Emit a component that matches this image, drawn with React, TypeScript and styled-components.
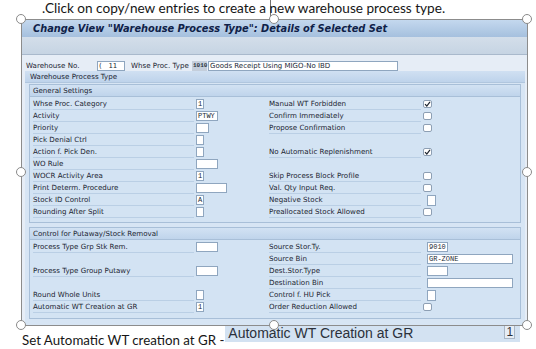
import React from 'react'
import styled, { createGlobalStyle } from 'styled-components'

type Cell =
  | { kind: 'field'; w: number; text?: string; h?: number; shift?: number }
  | { kind: 'check'; on: boolean }
  | null

type Line = [string | null, Cell, string | null, Cell]

const field = (w: number, text?: string, h?: number, shift?: number): Cell => ({ kind: 'field', w, text, h, shift })
const check = (on: boolean): Cell => ({ kind: 'check', on })

const generalRows: Line[] = [
  ['Whse Proc. Category', field(8, '1'), 'Manual WT Forbidden', check(true)],
  ['Activity', field(22, 'PTWY'), 'Confirm Immediately', check(false)],
  ['Priority', field(13), 'Propose Confirmation', check(false)],
  ['Pick Denial Ctrl', field(8), null, null],
  ['Action f. Pick Den.', field(8), 'No Automatic Replenishment', check(true)],
  ['WO Rule', field(22), null, null],
  ['WOCR Activity Area', field(8, '1'), 'Skip Process Block Profile', check(false)],
  ['Print Determ. Procedure', field(31), 'Val. Qty Input Req.', check(false)],
  ['Stock ID Control', field(8, 'A'), 'Negative Stock', field(9, undefined, 11, 4)],
  ['Rounding After Split', field(8), 'Preallocated Stock Allowed', check(false)],
]

const putawayRows: Line[] = [
  ['Process Type Grp Stk Rem.', field(22), 'Source Stor.Ty.', field(21, '9010', 10, 4)],
  [null, null, 'Source Bin', field(86, 'GR-ZONE', 10, 4)],
  ['Process Type Group Putawy', field(22), 'Dest.Stor.Type', field(21, undefined, 10, 4)],
  [null, null, 'Destination Bin', field(86, undefined, 10, 4)],
  ['Round Whole Units', field(8), 'Control f. HU Pick', field(9, undefined, 11, 4)],
  ['Automatic WT Creation at GR', field(8, '1'), 'Order Reduction Allowed', check(false)],
]

const GlobalStyle = createGlobalStyle`
  html, body {
    margin: 0;
    padding: 0;
    background: #ffffff;
  }
  body {
    width: 536px;
    height: 349px;
    overflow: hidden;
  }
`

const Page = styled.div`
  width: 536px;
  height: 349px;
  overflow: hidden;
  background: #ffffff;
  font-family: Lato, "Open Sans", sans-serif;
  color: #161616;
`

const Note = styled.p`
  margin: 0;
  height: 19px;
  padding-left: 42px;
  font-size: 13.6px;
  line-height: 17px;
  white-space: nowrap;
`

const Caret = styled.span`
  display: inline-block;
  width: 1px;
  height: 17px;
  margin-right: -1px;
  background: #707070;
  vertical-align: -4px;
`

const Frame = styled.div`
  position: relative;
  z-index: 1;
  margin-left: 21px;
  width: 505px;
  height: 305px;
  border: 1px solid #8c8c8c;
  background: #e6edf6;
  display: flex;
  flex-direction: column;
`

const Handle = styled.span<{ $h: 'l' | 'c' | 'r'; $v: 't' | 'm' | 'b' }>`
  position: absolute;
  width: 8px;
  height: 8px;
  border-radius: 50%;
  background: #ffffff;
  border: 1.5px solid #8a8a8a;
  left: ${(p) => (p.$h === 'l' ? '-6.5px' : p.$h === 'c' ? 'calc(50% - 6px)' : 'calc(100% - 5px)')};
  top: ${(p) => (p.$v === 't' ? '-6.5px' : p.$v === 'm' ? 'calc(50% - 6px)' : 'calc(100% - 5px)')};
`

const TitleBar = styled.div`
  height: 17px;
  padding-left: 11px;
  display: flex;
  align-items: center;
  background: linear-gradient(#c4d8ee, #a5c0de);
  font: italic bold 9.8px "DejaVu Sans", Verdana, sans-serif;
  color: #0f2148;
  white-space: nowrap;
`

const Toolbar = styled.div`
  height: 17px;
  background: linear-gradient(#d3deea, #c6d4e3);
  border-bottom: 1px solid #a9b9cc;
`

const Body = styled.div`
  flex: 1;
  padding: 5px 1px 0 3px;
  display: flex;
  flex-direction: column;
  font-family: "DejaVu Sans", Verdana, sans-serif;
  font-size: 7.1px;
  color: #1b2431;
`

const KeyRow = styled.div`
  height: 11px;
  padding-left: 1px;
  display: flex;
  align-items: center;
  white-space: nowrap;
`

const KeyLabel = styled.span<{ $w: number; $indent?: number }>`
  width: ${(p) => p.$w}px;
  padding-left: ${(p) => p.$indent ?? 0}px;
  box-sizing: border-box;
  flex: none;
`

const KeyValue = styled.span`
  width: 15px;
  height: 10px;
  flex: none;
  display: flex;
  align-items: center;
  padding-left: 1px;
  box-sizing: border-box;
  background: #c4cedb;
  font: bold 6px "Liberation Mono", monospace;
  color: #2a3442;
`

const OuterGroup = styled.section`
  width: 500px;
  flex: 1;
  display: flex;
  flex-direction: column;
  background: #d7e5f4;
  padding-bottom: 3px;
  box-sizing: border-box;
`

const OuterHead = styled.div`
  height: 11px;
  padding-left: 5px;
  display: flex;
  align-items: center;
  background: linear-gradient(#d0e0f2, #bed3eb);
  border-bottom: 1px solid #b0c6de;
`

const Box = styled.div<{ $gap: number; $pad: number }>`
  margin: ${(p) => p.$gap}px 4px 0;
  border: 1px solid #a8bfd8;
  background: #d3e3f3;
  padding-bottom: ${(p) => p.$pad}px;
`

const BoxHead = styled.div`
  height: 11px;
  padding-left: 3px;
  display: flex;
  align-items: center;
  background: linear-gradient(#d2e2f3, #bfd4eb);
  border-bottom: 1px solid #a8bfd8;
  margin-bottom: 1px;
`

const Row = styled.div`
  display: grid;
  grid-template-columns: 163px 73px 154px 1fr;
  height: 12px;
  padding-left: 3px;
`

const Label = styled.div<{ $empty?: boolean }>`
  display: flex;
  align-items: center;
  margin-right: 2px;
  white-space: nowrap;
  border-bottom: 1px solid ${(p) => (p.$empty ? 'transparent' : '#bacfe5')};
`

const Value = styled.div`
  display: flex;
  align-items: center;
`

const Field = styled.span<{ $w: number; $h: number; $shift: number; $plain?: boolean }>`
  display: inline-flex;
  align-items: center;
  box-sizing: border-box;
  width: ${(p) => p.$w}px;
  height: ${(p) => p.$h}px;
  margin-left: ${(p) => p.$shift}px;
  padding-left: 1px;
  background: #ffffff;
  border: 1px solid #8fa6bf;
  font: ${(p) => (p.$plain ? '7px "DejaVu Sans", Verdana, sans-serif' : '7px "Liberation Mono", monospace')};
  color: #222a35;
  white-space: pre;
  overflow: hidden;
`

const CheckBox = styled.span`
  display: inline-flex;
  align-items: center;
  justify-content: center;
  width: 9px;
  height: 8px;
  box-sizing: border-box;
  background: #ffffff;
  border: 1px solid #8d9fb4;
  border-radius: 2px;
`

const Footer = styled.div`
  display: flex;
  align-items: flex-start;
  padding-left: 22px;
  white-space: nowrap;
`

const FooterText = styled.span`
  margin-top: 6px;
  font-size: 13.3px;
  line-height: 17px;
`

const Snip = styled.div`
  width: 295px;
  height: 16px;
  margin-left: 1px;
  box-sizing: border-box;
  padding: 0 5px 0 3px;
  display: flex;
  align-items: flex-start;
  justify-content: space-between;
  background: #d3e2f2;
  font: 14px "Liberation Sans", Arial, sans-serif;
  color: #2b313b;
`

const SnipText = styled.span`
  line-height: 15px;
`

const SnipBox = styled.span`
  width: 11px;
  height: 14px;
  margin-top: -1px;
  box-sizing: border-box;
  border: 1px solid #a9b6c5;
  background: #e7edf4;
  display: flex;
  align-items: center;
  justify-content: center;
  font-size: 12px;
`

function Tick() {
  return (
    <svg width="7" height="6" viewBox="0 0 7 6">
      <path d="M1 3.2 L2.8 5 L6 0.8" stroke="#1f2530" strokeWidth="1.2" fill="none" />
    </svg>
  )
}

function CellView({ cell }: { cell: Cell }) {
  if (!cell) return <Value />
  if (cell.kind === 'check') {
    return (
      <Value>
        <CheckBox>{cell.on && <Tick />}</CheckBox>
      </Value>
    )
  }
  return (
    <Value>
      <Field $w={cell.w} $h={cell.h ?? 10} $shift={cell.shift ?? 0}>
        {cell.text}
      </Field>
    </Value>
  )
}

function Rows({ lines }: { lines: Line[] }) {
  return (
    <>
      {lines.map(([left, leftCell, right, rightCell], i) => (
        <Row key={i}>
          <Label $empty={!left}>{left}</Label>
          <CellView cell={leftCell} />
          <Label $empty={!right}>{right}</Label>
          <CellView cell={rightCell} />
        </Row>
      ))}
    </>
  )
}

export default function App() {
  return (
    <Page>
      <GlobalStyle />
      <Note>
        .Click on copy/new entries to create a <Caret />new warehouse process type.
      </Note>
      <Frame>
        <TitleBar>Change View "Warehouse Process Type": Details of Selected Set</TitleBar>
        <Toolbar />
        <Body>
          <KeyRow>
            <KeyLabel $w={71}>Warehouse No.</KeyLabel>
            <Field $w={28} $h={10} $shift={0} $plain>
              {'(   11'}
            </Field>
            <KeyLabel $w={67} $indent={6}>Whse Proc. Type</KeyLabel>
            <KeyValue>1010</KeyValue>
            <Field $w={190} $h={10} $shift={1} $plain>
              Goods Receipt Using MIGO-No IBD
            </Field>
          </KeyRow>
          <OuterGroup>
            <OuterHead>Warehouse Process Type</OuterHead>
            <Box $gap={1} $pad={4}>
              <BoxHead>General Settings</BoxHead>
              <Rows lines={generalRows} />
            </Box>
            <Box $gap={4} $pad={5}>
              <BoxHead>Control for Putaway/Stock Removal</BoxHead>
              <Rows lines={putawayRows} />
            </Box>
          </OuterGroup>
        </Body>
        <Handle $h="l" $v="t" />
        <Handle $h="c" $v="t" />
        <Handle $h="r" $v="t" />
        <Handle $h="l" $v="m" />
        <Handle $h="r" $v="m" />
        <Handle $h="l" $v="b" />
        <Handle $h="c" $v="b" />
        <Handle $h="r" $v="b" />
      </Frame>
      <Footer>
        <FooterText>Set Automatic WT creation at GR -</FooterText>
        <Snip>
          <SnipText>Automatic WT Creation at GR</SnipText>
          <SnipBox>1</SnipBox>
        </Snip>
      </Footer>
    </Page>
  )
}
